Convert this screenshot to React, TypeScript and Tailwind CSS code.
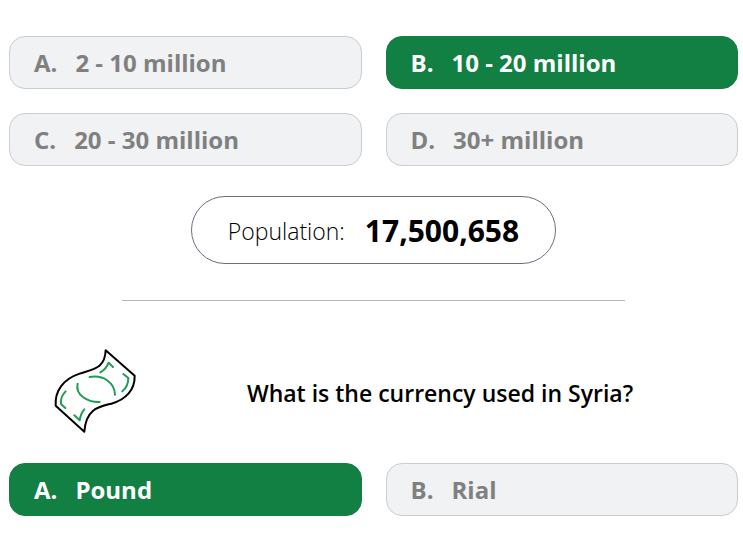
import React from 'react';
import clsx from 'clsx';

interface Answer {
  letter: string;
  text: string;
  correct?: boolean;
}

const populationAnswers: Answer[] = [
  { letter: 'A', text: '2 - 10 million' },
  { letter: 'B', text: '10 - 20 million', correct: true },
  { letter: 'C', text: '20 - 30 million' },
  { letter: 'D', text: '30+ million' },
];

const currencyAnswers: Answer[] = [
  { letter: 'A', text: 'Pound', correct: true },
  { letter: 'B', text: 'Rial' },
];

function AnswerGrid({ answers }: { answers: Answer[] }) {
  return (
    <div className="grid grid-cols-2 gap-6">
      {answers.map(({ letter, text, correct }) => (
        <button
          key={letter}
          type="button"
          className={clsx(
            'flex items-center gap-[18px] rounded-2xl border px-6 py-[9px] text-left text-[24px] leading-[33px] font-bold',
            correct
              ? 'border-[#127f43] bg-[#127f43] text-white'
              : 'border-[#c9ccd1] bg-[#f1f2f4] text-[#808080]'
          )}
        >
          <span>{letter}.</span>
          <span>{text}</span>
        </button>
      ))}
    </div>
  );
}

function BanknoteIcon() {
  return (
    <svg
      viewBox="39 39 255 258"
      className="h-[86px] w-[85px] shrink-0"
      fill="none"
      strokeLinecap="round"
      strokeLinejoin="round"
      aria-hidden="true"
    >
      {/* Bill outline */}
      <path
        d="M197 46L284 122C285 164 258 194 214 206C174 216 138 222 133 290L47 212C44 168 70 132 119 116C162 102 195 100 197 46Z"
        stroke="#000"
        strokeWidth="6"
      />
      {/* Center oval and corner marks */}
      <g stroke="#1f9d55" strokeWidth="6">
        <path d="M149 126C190 119 224 143 225 179" />
        <path d="M113 146C105 178 141 202 179 201" />
        <path d="M181 112C194 105 201 96 206 83L219 96" />
        <path d="M250 117L265 129C265 148 259 159 247 169" />
        <path d="M77 169C66 180 61 191 63 207L76 219" />
        <path d="M133 223C123 234 121 244 119 256L103 241" />
      </g>
    </svg>
  );
}

export default function App() {
  return (
    <main className="bg-white pt-9 pr-[5px] pb-5 pl-[9px] font-['Open_Sans','Noto_Sans',sans-serif] text-black">
      <AnswerGrid answers={populationAnswers} />

      <div className="mt-[30px] flex justify-center">
        <p className="flex items-center gap-5 rounded-full border border-[#68707f] px-9 pt-[13px] pb-[11px]">
          <span className="text-[23px] leading-[42px] font-light">Population:</span>
          <strong className="text-[30px] leading-[42px] font-bold">17,500,658</strong>
        </p>
      </div>

      <hr className="mx-auto mt-9 w-[69%] border-[#b4b7ba]" />

      <div className="mt-[47px] mb-[29px] flex items-center pl-11">
        <BanknoteIcon />
        <h2 className="flex-1 pt-1 pl-1 text-center text-[23px] leading-8 font-semibold">
          What is the currency used in Syria?
        </h2>
      </div>

      <AnswerGrid answers={currencyAnswers} />
    </main>
  );
}
